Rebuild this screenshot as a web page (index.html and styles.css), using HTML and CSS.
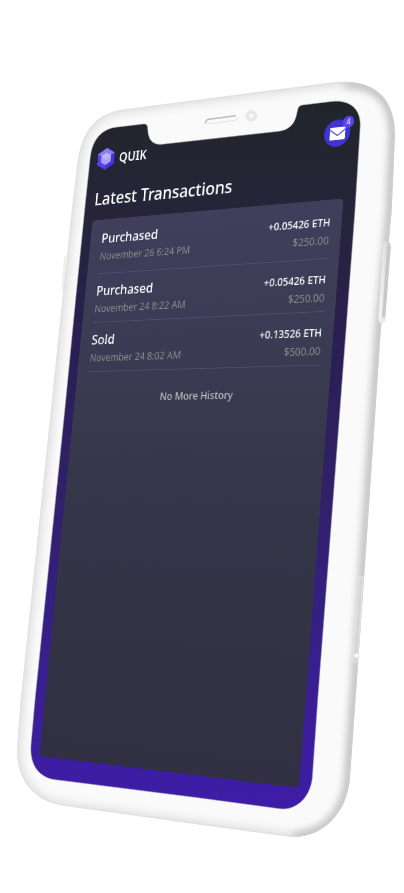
FILE: index.html
```html
<!DOCTYPE html>
<html lang="en">
<head>
<meta charset="utf-8">
<title>Quik</title>
<link rel="stylesheet" href="styles.css">
</head>
<body>
<div class="stage">
  <svg class="device" viewBox="0 0 404 893" aria-hidden="true">
    <defs>
      <path id="body" d="M71.8 210L76.5 171C80 134 93 114 123 109.5L330 82.8C373 77 395 97 395 135L391.7 210L380.8 330L366.7 540L355.5 700L349.8 780C346 815 321 839 290 836.8L200 824.7L62 805.5C30 800 15 775 17.3 745L20.7 700L61.8 305Z"/>
      <clipPath id="bodyClip"><use href="#body"/></clipPath>
      <linearGradient id="wall" gradientUnits="userSpaceOnUse" x1="0" y1="100" x2="0" y2="809">
        <stop offset="0" stop-color="#20252a"/>
        <stop offset=".16" stop-color="#272439"/>
        <stop offset=".32" stop-color="#291f50"/>
        <stop offset=".55" stop-color="#302068"/>
        <stop offset=".8" stop-color="#391f8d"/>
        <stop offset=".95" stop-color="#3d1da3"/>
        <stop offset="1" stop-color="#3f1ca8"/>
      </linearGradient>
      <linearGradient id="key" x1="0" x2="1" y1="0" y2="0">
        <stop offset="0" stop-color="#f7f7f7"/><stop offset=".45" stop-color="#e6e6e6"/><stop offset="1" stop-color="#c4c4c4"/>
      </linearGradient>
      <filter id="soft" filterUnits="userSpaceOnUse" x="0" y="60" width="404" height="800"><feGaussianBlur stdDeviation="4"/></filter>
      <filter id="softer" filterUnits="userSpaceOnUse" x="0" y="60" width="404" height="800"><feGaussianBlur stdDeviation="1.2"/></filter>
    </defs>
    <path d="M66 255L64 257L61.5 290L64 292Z" fill="#eee"/>
    <use href="#body" fill="#fafafa"/>
    <g clip-path="url(#bodyClip)" fill="none">
      <use href="#body" stroke="#dedede" stroke-width="8" filter="url(#soft)"/>
      <path d="M345 83C380 83 395 100 395 135L391.7 210L380.8 330L366.7 540L355.5 700L349.8 780C346 815 325 837 294 837" stroke="#bcbcbc" stroke-width="9" filter="url(#soft)"/>
      <use href="#body" stroke="#d6d6d6" stroke-width="1.2" filter="url(#softer)"/>
    </g>
    <path d="M383.5 243Q386 240.5 389.5 242.5Q391 244 390.7 248L385.3 319Q385 322.5 382 323Q378.5 322.5 378.5 318Z" fill="url(#key)"/>
    <path d="M388.7 247L383.7 316" stroke="#c8c8c8" stroke-width="3.2" stroke-linecap="round" fill="none"/>
    <path d="M359.5 577Q361 575.5 363 577L358 659Q357 663 354.5 662.5Q353 661 353.3 658Z" fill="#d6d6d6" stroke="#e8e8e8" stroke-width=".8"/>
    <circle cx="356.3" cy="655.5" r="1.9" fill="#fff"/>
    <path fill="url(#wall)" stroke="#a9a9b0" stroke-width=".5" d="M31 745L35 700L64.8 410L75.6 300L85.7 200L90.3 157C92.5 139 102 129 116 127.2L143.5 124Q147.3 123.5 147.6 127.5L148.2 134Q150.5 145.5 162 144.3L279 131.3C289 130 295 124 296.8 113.5L298 108.5Q299 105.3 303 104.9L332 101.4C350 99.5 361 109 360.2 126L355 210L346 330L330 540L317.7 700L312.3 778C310 798 296 810.5 280 808.8L200 798L54 779.6C39 777 29.5 765 31 745Z"/>
    <path d="M205.5 123.5Q205.5 119.8 209 119.3L236 115.7" fill="none" stroke="#bdbdbd" stroke-width="1.4"/>
    <path d="M207 124L235 120.3Q238 119.5 238 117" fill="none" stroke="#e4e4e4" stroke-width="1"/>
    <circle cx="251.3" cy="115.8" r="5.2" fill="#f4f4f4" stroke="#dcdcdc" stroke-width=".9"/>
    <circle cx="251.3" cy="115.8" r="3.5" fill="#f7f7f7" stroke="#d6d6d6" stroke-width=".9"/>
  </svg>

  <main class="app">
    <header class="bar">
      <div class="brand">
        <svg class="logo" viewBox="0 0 24 28">
          <path d="M12 0L24 7V21L12 28L0 21V7Z" fill="#5b3ef8"/>
          <path d="M12 0L24 7L18 11L12 7L6 11L0 7Z" fill="#8c7cfb"/>
          <path d="M24 7V21L12 28V21L18 17.500V10Z" fill="#4334dc"/>
          <path d="M12 6L19 10V18L12 22L5 18V10Z" fill="#aca2f3"/>
          <path d="M12 6L19 10L12 15L5 10Z" fill="#bdb5f5"/>
        </svg>
        <span class="name">QUIK</span>
      </div>
      <div class="mail">
        <svg class="envelope" viewBox="0 0 18 14">
          <rect width="18" height="14" rx="1.200" fill="#fff"/>
          <path d="M0 2.500L9 9.200L18 2.500" fill="none" stroke="#4034d4" stroke-width="1.200"/>
        </svg>
        <span class="badge">4</span>
      </div>
    </header>
    <h1 class="title">Latest Transactions</h1>
    <section class="card">
      <article class="row first">
        <div class="what"><b>Purchased</b><span>November 26 6:24 PM</span></div>
        <div class="amount"><b>+0.05426 ETH</b><span>$250.00</span></div>
      </article>
      <article class="row">
        <div class="what"><b>Purchased</b><span>November 24 8:22 AM</span></div>
        <div class="amount"><b>+0.05426 ETH</b><span>$250.00</span></div>
      </article>
      <article class="row">
        <div class="what"><b>Sold</b><span>November 24 8:02 AM</span></div>
        <div class="amount"><b>+0.13526 ETH</b><span>$500.00</span></div>
      </article>
      <p class="end">No More History</p>
    </section>
  </main>
</div>
</body>
</html>
```
FILE: styles.css
```css
body {
  margin: 0;
  background: #fff;
  font-family: "Noto Sans", "Open Sans", sans-serif;
}

.stage {
  position: relative;
  width: 404px;
  height: 893px;
  overflow: hidden;
}

.device {
  display: block;
  width: 404px;
  height: 893px;
}

/* The app is laid out flat, then projected onto the tilted screen. */
.app {
  position: absolute;
  left: 0;
  top: 0;
  width: 335px;
  transform-origin: 0 0;
  transform:
    matrix3d(0.6580, -0.11842, 0, -0.00026567,
             -0.08446, 0.7680, 0, -0.00007388,
             0, 0, 1, 0,
             92.5, 220.5, 0, 1)
    translateY(-100px);
}

.bar {
  display: flex;
  align-items: center;
  justify-content: space-between;
  height: 44px;
}

.brand {
  display: flex;
  align-items: center;
  gap: 7px;
  margin-left: -1px;
}

.logo {
  width: 24px;
  height: 28px;
}

.name {
  font-size: 15.5px;
  font-weight: 600;
  line-height: 22px;
  color: #fff;
}

.mail {
  position: relative;
  display: flex;
  align-items: center;
  justify-content: center;
  width: 32px;
  height: 32px;
  margin-right: -2px;
  border-radius: 50%;
  background: #4034d4;
}

.envelope {
  width: 19px;
  height: 15px;
}

.badge {
  position: absolute;
  top: -3px;
  right: -4px;
  width: 14px;
  height: 14px;
  border-radius: 50%;
  background: #5b45ee;
  color: #fff;
  font-size: 9px;
  line-height: 14px;
  text-align: center;
}

.title {
  margin: 15px 0 13px;
  font-size: 21px;
  font-weight: 460;
  line-height: 28px;
  letter-spacing: -0.1px;
  color: #fff;
}

.card {
  box-sizing: border-box;
  height: 650px;
  padding: 3px 13px 0 16px;
  border-radius: 5px;
  background: linear-gradient(#3f3f5c, #3b3b54 25%, #36364a 50%, #303042);
}

.row {
  display: flex;
  justify-content: space-between;
  box-sizing: border-box;
  height: 61px;
  padding-top: 10px;
  border-bottom: 1px solid #4f4f6e;
}

.row.first {
  height: 66px;
}

.what,
.amount {
  display: flex;
  flex-direction: column;
}

.what b {
  font-size: 16px;
  font-weight: 470;
  line-height: 23px;
  color: #fff;
}

.what span {
  font-size: 12.2px;
  line-height: 22px;
  color: #8b8b8e;
}

.amount {
  align-items: flex-end;
  padding-top: 4px;
}

.row.first .amount {
  padding-top: 4px;
}

.amount b {
  margin-right: 1px;
  font-size: 12.1px;
  font-weight: 480;
  line-height: 20px;
  color: #fff;
}

.amount span {
  margin-right: 1px;
  font-size: 12.2px;
  line-height: 21px;
  color: #8b8b8e;
}

.end {
  margin: 22px 0 0;
  padding-right: 3px;
  font-size: 12.3px;
  font-weight: 470;
  line-height: 20px;
  text-align: center;
  color: #bdbdc0;
}
```
